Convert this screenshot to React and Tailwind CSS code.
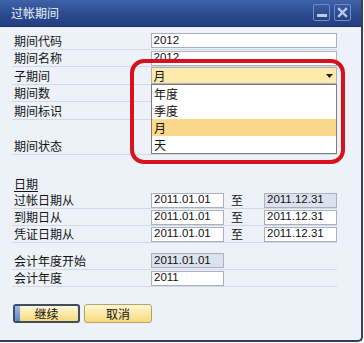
import React from "react";

const CJK = { fontFamily: '"Noto Sans CJK SC", "Noto Sans", sans-serif' };
const VAL = { fontFamily: '"Liberation Sans", "Noto Sans CJK SC", sans-serif' };

function Field({ value, w = "w-[187px]", disabled = false }) {
  return (
    <div
      className={`${w} h-[15px] border border-[#a9b1bf] ${disabled ? "bg-[#dbe2ed]" : "bg-white"} flex items-center pl-[2px] text-[11.5px] leading-none text-[#111] overflow-hidden`}
      style={VAL}
    >
      {value}
    </div>
  );
}

function Row({ h, label, children, line = true, underline = false }) {
  return (
    <div className={`${h} flex items-center ${line ? "border-b border-[#d3d9e3]" : ""}`}>
      <div className={`w-[139px] pl-[2px] text-[12px] leading-none text-[#141414] ${underline ? "underline underline-offset-2" : ""}`} style={CJK}>
        {label}
      </div>
      {children}
    </div>
  );
}

function DateRow({ h, label, from, to, toDisabled = false }) {
  return (
    <Row h={h} label={label}>
      <Field value={from} w="w-[73px]" />
      <div className="w-[40px] pl-[7px] text-[12px] leading-none text-[#141414]" style={CJK}>至</div>
      <Field value={to} w="w-[73px]" disabled={toDisabled} />
    </Row>
  );
}

export default function App() {
  return (
    <div className="w-[364px] h-[343px] bg-white relative overflow-hidden">
      <div className="w-[363px] h-[342px] bg-[#edf1f8] border-r-2 border-b-2 border-[#34425e] rounded-br-[5px] flex flex-col overflow-hidden">
        {/* title bar */}
        <div className="h-[27px] shrink-0 bg-linear-to-b from-[#4062a8] via-[#2d4d91] to-[#223f7f] border-b border-[#1a3168] flex items-center pl-[11px] pr-[10px]">
          <div className="text-[12px] leading-none text-[#eef3fb] flex-1" style={CJK}>过帐期间</div>
          <div className="flex gap-[4px] items-center -mt-[2px]">
            <div className="w-[17px] h-[17px] border border-[#6f8ccb] rounded-[2px] bg-linear-to-b from-[#3a5aa0] to-[#25427f] flex items-end justify-center pb-[3px]">
              <div className="w-[10px] h-[3px] bg-[#b7cbef]" />
            </div>
            <div className="w-[17px] h-[17px] border border-[#6f8ccb] rounded-[2px] bg-linear-to-b from-[#3a5aa0] to-[#25427f] flex items-center justify-center">
              <svg width="11" height="11" viewBox="0 0 11 11">
                <path d="M2 2 L9 9 M9 2 L2 9" stroke="#b7cbef" strokeWidth="2.4" strokeLinecap="square" />
              </svg>
            </div>
          </div>
        </div>

        {/* content */}
        <div className="pl-[12px] w-[337px] mt-[5px] flex flex-col">
          <Row h="h-[18px]" label="期间代码"><Field value="2012" /></Row>
          <Row h="h-[17px]" label="期间名称"><Field value="2012" /></Row>
          <div className="h-[18px] flex items-start border-b border-[#d3d9e3]">
            <div className="w-[139px] pl-[2px] text-[12px] leading-none text-[#141414] self-center" style={CJK}>子期间</div>
            <div className="w-[187px] h-[17px] border border-[#a9b1bf] bg-[#fcebab] flex items-center pl-[2px] pr-[3px]">
              <span className="flex-1 text-[12px] leading-none text-[#111]" style={CJK}>月</span>
              <svg width="7" height="4" viewBox="0 0 7 4"><path d="M0 0 H7 L3.5 4 Z" fill="#222" /></svg>
            </div>
          </div>
          <Row h="h-[17px]" label="期间数" />
          <Row h="h-[18px]" label="期间标识" />
          <div className="h-[17px]" />
          <Row h="h-[18px]" label="期间状态" />

          <div className="h-[20px]" />
          <Row h="h-[17px]" label="日期" line={false} underline />
          <DateRow h="h-[17px]" label="过帐日期从" from="2011.01.01" to="2011.12.31" toDisabled />
          <DateRow h="h-[17px]" label="到期日从" from="2011.01.01" to="2011.12.31" />
          <DateRow h="h-[17px]" label="凭证日期从" from="2011.01.01" to="2011.12.31" />

          <div className="h-[9px]" />
          <Row h="h-[18px]" label="会计年度开始"><Field value="2011.01.01" w="w-[73px]" disabled /></Row>
          <Row h="h-[17px]" label="会计年度"><Field value="2011" w="w-[73px]" /></Row>

          <div className="h-[17px]" />
          <div className="flex gap-[4px] pl-[1px]">
            <div className="relative w-[67px] h-[19px] border-2 border-[#3f4d62] rounded-[3px] bg-linear-to-b from-[#fff7d4] to-[#f7da78] flex items-center justify-center overflow-hidden">
              <div className="absolute left-0 top-0 bottom-0 w-[5px] bg-linear-to-b from-[#9bb8e6] to-[#5f86c8]" />
              <span className="text-[12px] leading-none text-[#111]" style={CJK}>继续</span>
            </div>
            <div className="w-[68px] h-[19px] border border-[#b5a36a] rounded-[3px] bg-linear-to-b from-[#fff7d4] to-[#f7da78] flex items-center justify-center">
              <span className="text-[12px] leading-none text-[#111]" style={CJK}>取消</span>
            </div>
          </div>
        </div>
      </div>

      {/* dropdown list */}
      <div className="absolute left-[151px] top-[84px] w-[186px] h-[70px] border border-[#7c7c7c] bg-white flex flex-col">
        {["年度", "季度", "月", "天"].map((t) => (
          <div
            key={t}
            className={`h-[17px] flex items-center pl-[2px] text-[12px] leading-none text-[#111] ${t === "月" ? "bg-[#fbd98c]" : ""}`}
            style={CJK}
          >
            {t}
          </div>
        ))}
      </div>

      {/* red annotation ring */}
      <div className="absolute left-[130px] top-[59px] w-[215px] h-[105px] border-[4px] border-[#d8121c] rounded-[14px]" />
    </div>
  );
}
